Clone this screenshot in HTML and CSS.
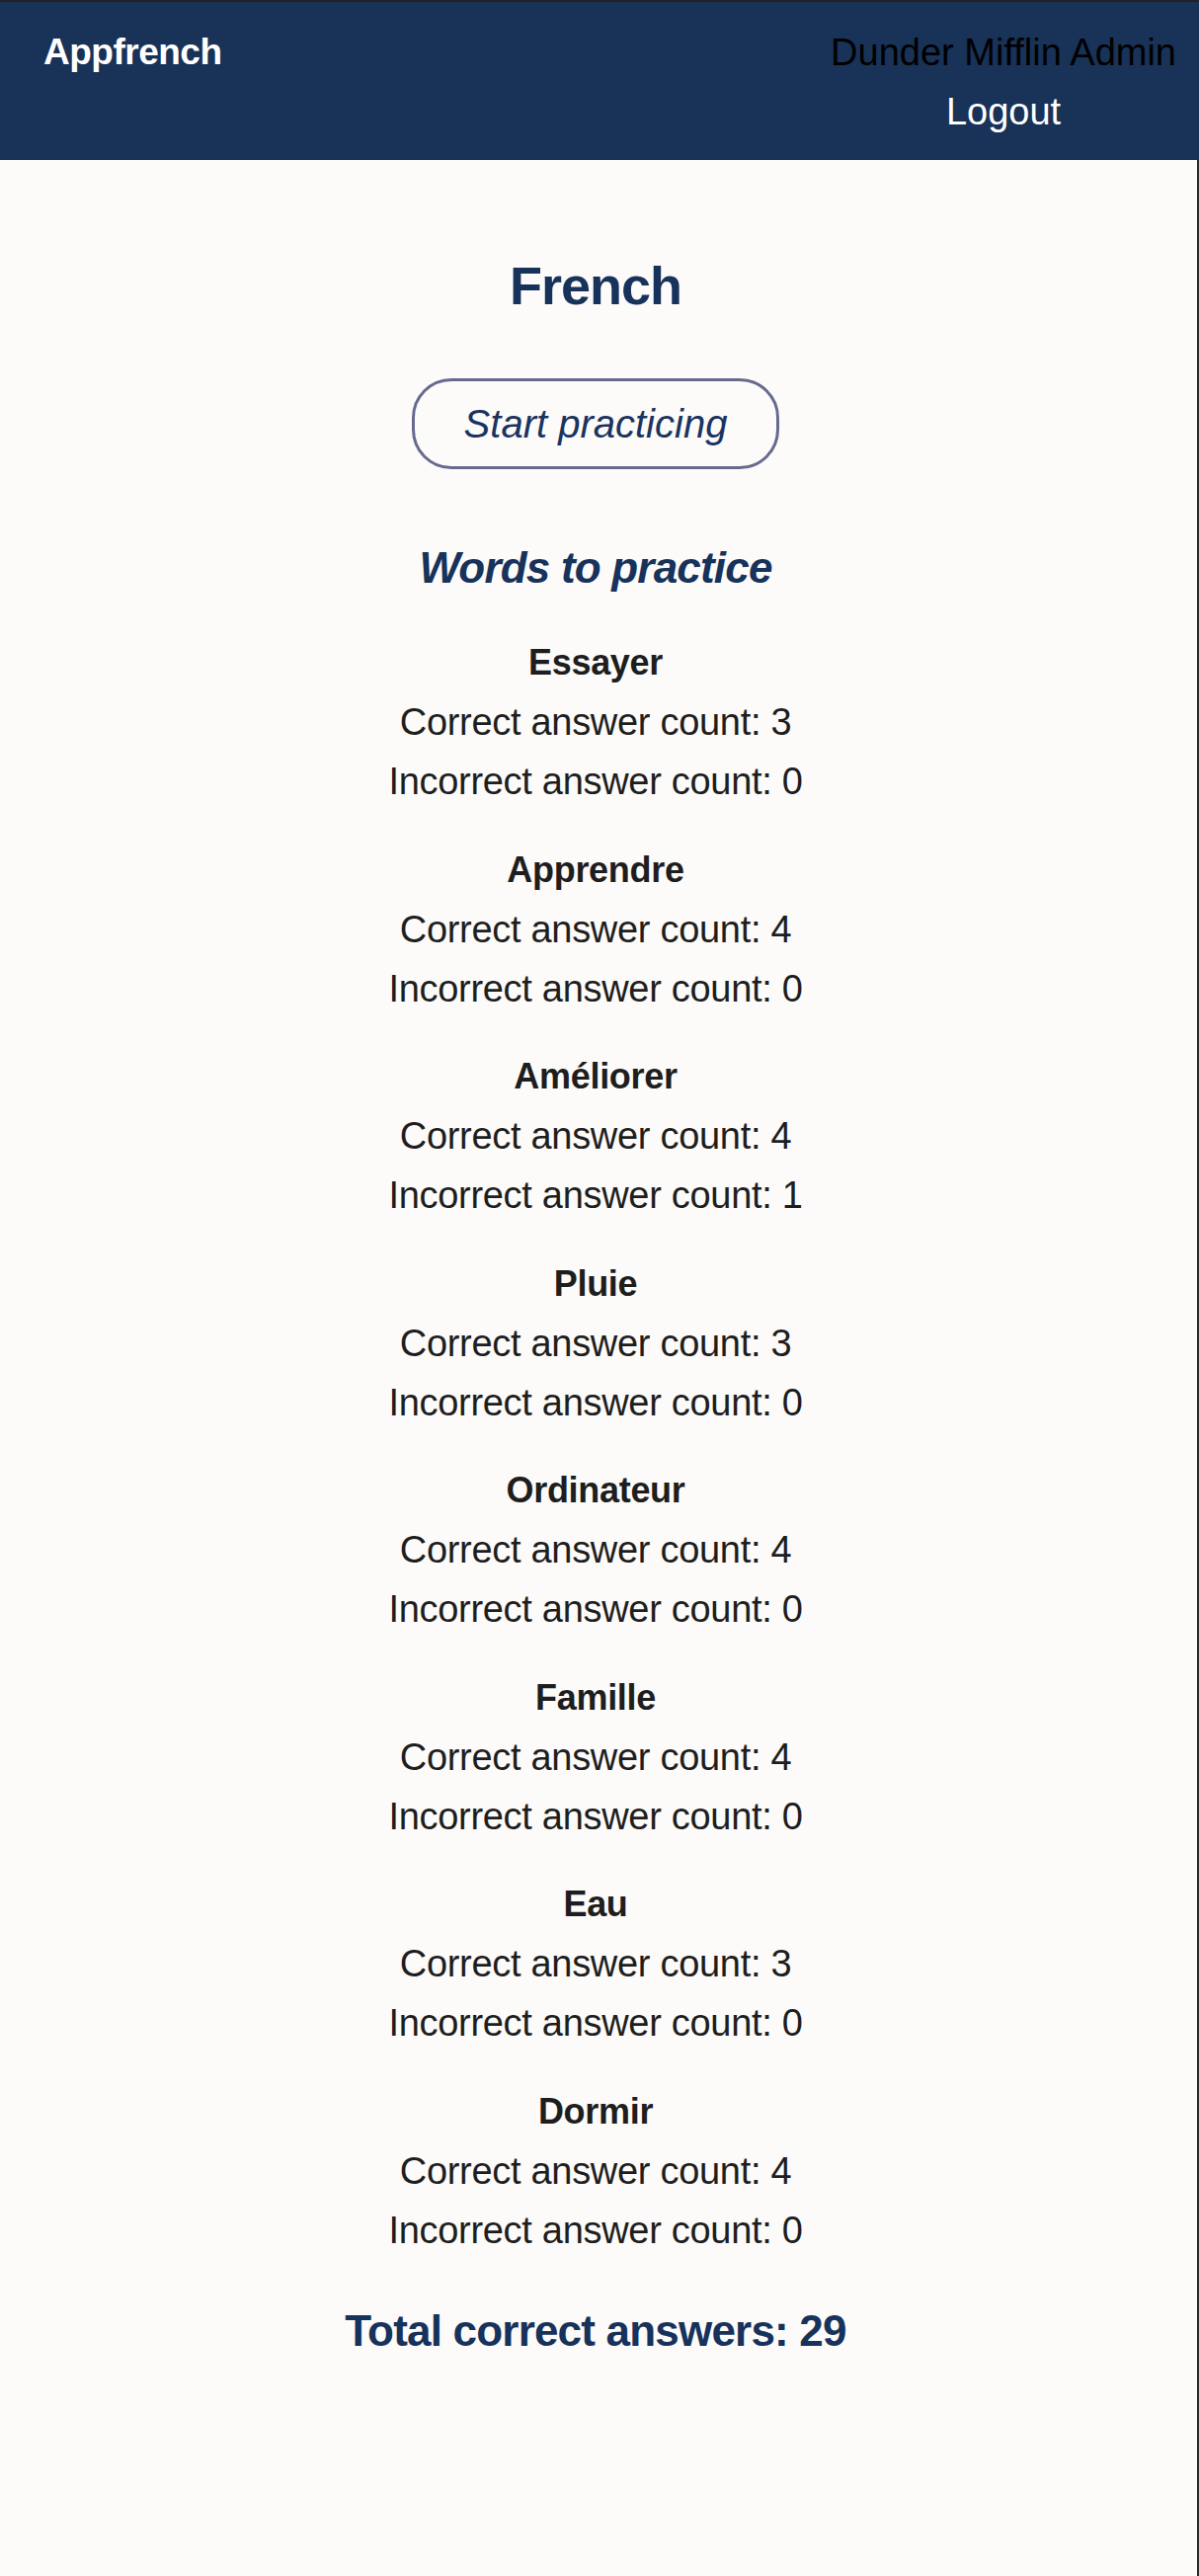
FILE: index.html
```html
<!DOCTYPE html>
<html lang="en">
<head>
<meta charset="utf-8">
<title>Appfrench - French</title>
<link rel="stylesheet" href="styles.css">
</head>
<body>
<header class="topbar">
  <div class="brand">Appfrench</div>
  <div class="user">
    <div class="user-name">Dunder Mifflin Admin</div>
    <a class="logout" href="#">Logout</a>
  </div>
</header>
<main class="page">
  <h1 class="title">French</h1>
  <button class="start-btn" type="button">Start practicing</button>
  <h2 class="subtitle">Words to practice</h2>
  <ul class="words">
    <li class="word"><h3 class="word-name">Essayer</h3><p class="count">Correct answer count: 3</p><p class="count">Incorrect answer count: 0</p></li>
    <li class="word"><h3 class="word-name">Apprendre</h3><p class="count">Correct answer count: 4</p><p class="count">Incorrect answer count: 0</p></li>
    <li class="word"><h3 class="word-name">Améliorer</h3><p class="count">Correct answer count: 4</p><p class="count">Incorrect answer count: 1</p></li>
    <li class="word"><h3 class="word-name">Pluie</h3><p class="count">Correct answer count: 3</p><p class="count">Incorrect answer count: 0</p></li>
    <li class="word"><h3 class="word-name">Ordinateur</h3><p class="count">Correct answer count: 4</p><p class="count">Incorrect answer count: 0</p></li>
    <li class="word"><h3 class="word-name">Famille</h3><p class="count">Correct answer count: 4</p><p class="count">Incorrect answer count: 0</p></li>
    <li class="word"><h3 class="word-name">Eau</h3><p class="count">Correct answer count: 3</p><p class="count">Incorrect answer count: 0</p></li>
    <li class="word"><h3 class="word-name">Dormir</h3><p class="count">Correct answer count: 4</p><p class="count">Incorrect answer count: 0</p></li>
  </ul>
  <p class="total">Total correct answers: 29</p>
</main>
</body>
</html>
```
FILE: styles.css
```css
html, body {
  margin: 0;
  padding: 0;
}

body {
  background: #fcfbf9;
  border-top: 2px solid #222222;
  font-family: "Liberation Sans", Arial, sans-serif;
  color: #1e1e1e;
}

.topbar {
  display: flex;
  justify-content: space-between;
  align-items: flex-start;
  background: #183258;
  padding: 21px 23px 19px 44px;
}

.brand {
  font-size: 37px;
  line-height: 60px;
  font-weight: 700;
  letter-spacing: -0.5px;
  color: #ffffff;
}

.user {
  display: flex;
  flex-direction: column;
  align-items: center;
  font-size: 38px;
  line-height: 60px;
}

.user-name {
  color: #000000;
}

.logout {
  color: #ffffff;
  text-decoration: none;
}

.page {
  display: flex;
  flex-direction: column;
  align-items: center;
  box-sizing: border-box;
  min-height: calc(100vh - 162px);
  padding: 95px 6px 40px 0;
  border-right: 2px solid #2a2a2a;
  text-align: center;
}

.title {
  margin: 0;
  font-size: 54px;
  line-height: 64px;
  font-weight: 700;
  letter-spacing: -1px;
  color: #17325b;
}

.start-btn {
  margin-top: 62px;
  width: 372px;
  height: 92px;
  box-sizing: border-box;
  padding: 0;
  border: 3px solid #666a8e;
  border-radius: 40px;
  background: transparent;
  font-family: "Liberation Sans", Arial, sans-serif;
  font-style: italic;
  font-size: 40px;
  color: #1a3361;
  cursor: pointer;
}

.subtitle {
  margin: 72px 0 0;
  font-size: 44px;
  line-height: 56px;
  font-style: italic;
  font-weight: 700;
  letter-spacing: -0.8px;
  color: #17325b;
}

.words {
  list-style: none;
  margin: 38px 0 0;
  padding: 0;
  display: flex;
  flex-direction: column;
  gap: 29.5px;
}

.word-name {
  margin: 0;
  font-size: 36px;
  line-height: 60px;
  font-weight: 700;
  letter-spacing: -0.3px;
  color: #1e1e1e;
}

.count {
  margin: 0;
  font-size: 38px;
  line-height: 60px;
  letter-spacing: -0.3px;
  color: #1e1e1e;
}

.total {
  margin: 44px 0 0;
  font-size: 44px;
  line-height: 56px;
  font-weight: 700;
  letter-spacing: -0.8px;
  color: #17325b;
}
```
